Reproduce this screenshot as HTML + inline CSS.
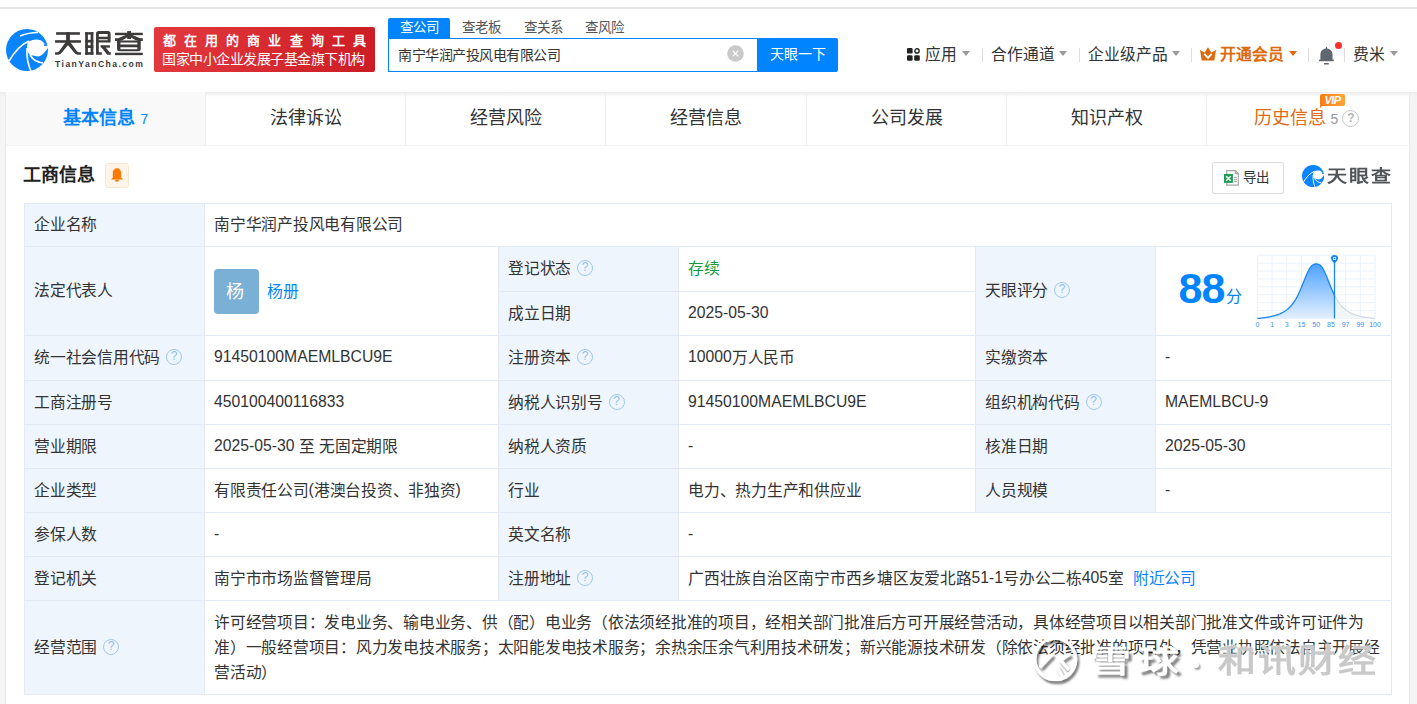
<!DOCTYPE html>
<html lang="zh-CN"><head><meta charset="utf-8">
<style>
*{margin:0;padding:0;box-sizing:border-box}
html,body{width:1417px;height:704px;overflow:hidden}
body{position:relative;background:#f5f5f5;font-family:"Liberation Sans",sans-serif;color:#333}
.a{position:absolute;white-space:nowrap}
#hdr{position:absolute;left:0;top:0;width:1417px;height:92px;background:#fff}
#topline{position:absolute;left:0;top:7px;width:1417px;height:2px;background:#e3e3e3}
.stab{position:absolute;top:18px;height:20px;width:62px;text-align:center;font-size:13.5px;line-height:20px;color:#555}
.nav{position:absolute;top:45px;font-size:15.75px;line-height:20px;color:#333}
.tri{position:absolute;top:51px;width:0;height:0;border-left:4.5px solid transparent;border-right:4.5px solid transparent;border-top:5px solid #9a9a9a}
.sep{position:absolute;top:48px;width:1px;height:14px;background:#ddd}
#card{position:absolute;left:5px;top:92px;width:1405px;height:612px;background:#fff;border-left:1px solid #ebebeb;border-right:1px solid #ebebeb}
#shadow{position:absolute;left:0;top:92px;width:1417px;height:5px;background:linear-gradient(#ececec,rgba(255,255,255,0))}
.tab{position:absolute;top:92px;height:54px;border-bottom:1px solid #f2f2f2;font-size:18px;line-height:53px;text-align:center;color:#333;border-right:1px solid #eee}
.c{position:absolute;border-left:1px solid #e2ebf5;border-top:1px solid #e2ebf5;font-size:15.75px;color:#333;white-space:nowrap}
.l{background:#eef5fc}
.t{position:absolute;left:9px;top:50%;transform:translateY(-50%);line-height:20px}
.q{display:inline-block;width:16px;height:16px;border:1.2px solid #9fc8f0;border-radius:50%;color:#92bfec;font-size:12px;line-height:14px;text-align:center;vertical-align:top;margin-left:6px;margin-top:1px}
.av{position:absolute;left:9px;top:22px;width:45px;height:45px;border-radius:4px;background:#7aafd6;color:#fff;font-size:18px;line-height:47px;text-align:center;text-indent:-3px}
.scope{position:absolute;left:9px;top:9px;line-height:25px}
.qh{display:inline-block;width:17px;height:17px;border:1.6px solid #c9c9c9;border-radius:50%;color:#b5b5b5;font-weight:bold;font-size:12px;line-height:14px;text-align:center;vertical-align:middle;margin-left:4px;position:relative;top:-1px}
.zh{letter-spacing:-0.25px}
.lat{position:relative;top:-1px}
</style></head>
<body>
<div id="hdr">
  <div id="topline"></div>
  <!-- logo -->
  <svg class="a" style="left:3px;top:26px" width="48" height="48" viewBox="0 0 48 48">
    <circle cx="24" cy="24" r="21" fill="#0a84ff"/>
    <path d="M25 16 C30 12.5 38 12.5 41 17 C42 18 41.2 19.5 40.5 20 L46 19.5 L46 21 C43 23.5 41 29.5 35 30.5 C31 30 28.5 29 27 29 C25 27 24 24.5 24 22 C24 19.5 24.3 17.5 25 16 Z" fill="#fff"/>
    <path d="M6 35 C12 25 19 18 26 15" stroke="#fff" stroke-width="1.6" fill="none"/>
    <path d="M24 22 C23.5 32 25 39 28 45" stroke="#fff" stroke-width="1.6" fill="none"/>
    <path d="M27 29 C30 34 35 36.5 40 37" stroke="#fff" stroke-width="1.6" fill="none"/>
    <path d="M17 10 C23 7.5 30 6.5 35 6.5" stroke="#fff" stroke-width="1.4" fill="none"/>
  </svg>
  <svg class="a" style="left:52px;top:28px" width="96" height="30" viewBox="0 0 1417 443">
<g fill="#3d3a3a">
<rect x="60" y="62" width="352" height="38"/>
<rect x="45" y="180" width="382" height="38"/>
<rect x="208" y="62" width="56" height="156"/>
<path d="M200 212 L272 212 L158 348 Q128 395 92 395 L45 395 L45 357 L82 357 Q100 352 116 328 Z"/>
<path d="M200 212 L272 212 L356 328 Q372 352 390 357 L427 357 L427 395 L380 395 Q344 395 314 348 Z"/>
<rect x="490" y="62" width="40" height="333"/>
<rect x="570" y="62" width="40" height="333"/>
<rect x="490" y="62" width="120" height="35"/>
<rect x="490" y="175" width="120" height="40"/>
<rect x="490" y="255" width="120" height="40"/>
<rect x="490" y="357" width="120" height="38"/>
<path d="M650 395 L650 85 Q650 45 690 45 L825 45 Q865 45 865 85 L865 215 L690 215 L690 357 L735 357 L735 395 Z M690 90 L690 128 L822 128 L822 90 Z M690 165 L690 180 L822 180 L822 165 Z"/>
<rect x="720" y="255" width="135" height="35"/>
<path d="M712 262 L772 262 L850 357 L868 357 L868 395 L815 395 Z"/>
<rect x="930" y="70" width="410" height="36"/>
<rect x="1110" y="45" width="56" height="118"/>
<path d="M1100 98 L1175 98 L1040 180 Q1015 192 990 192 L930 192 L930 150 L975 150 Z"/>
<path d="M1176 98 L1101 98 L1236 180 Q1261 192 1286 192 L1340 192 L1340 150 L1301 150 Z"/>
<path d="M960 185 L1310 185 L1310 305 Q1310 342 1272 342 L998 342 Q960 342 960 305 Z M1010 215 L1010 245 L1260 245 L1260 215 Z M1010 285 L1010 312 L1260 312 L1260 285 Z"/>
<rect x="930" y="365" width="410" height="36"/>
</g>
</svg>

  <div class="a" style="left:55px;top:58px;font-size:8.6px;line-height:12px;font-weight:bold;color:#3b3939;letter-spacing:1.45px">TianYanCha.com</div>
  <!-- red banner -->
  <div class="a" style="left:154px;top:27px;width:221px;height:45px;border-radius:2px;background:linear-gradient(100deg,#e3393e,#cc1d24)"></div>
  <div class="a" style="left:163px;top:32px;font-size:13px;line-height:17px;color:#fff;font-weight:bold;letter-spacing:8.1px">都在用的商业查询工具</div>
  <div class="a" style="left:162px;top:50px;font-size:14px;letter-spacing:-0.47px;line-height:18px;color:#fff">国家中小企业发展子基金旗下机构</div>
  <!-- search -->
  <div class="stab" style="left:388px;background:#0084ff;color:#fff;border-radius:2px 2px 0 0">查公司</div>
  <div class="stab" style="left:450px">查老板</div>
  <div class="stab" style="left:512px">查关系</div>
  <div class="stab" style="left:573px">查风险</div>
  <div class="a" style="left:388px;top:38px;width:372px;height:34px;border:1px solid #0084ff;border-right:none;background:#fff"></div>
  <div class="a" style="left:398px;top:45px;font-size:14px;letter-spacing:-0.5px;line-height:20px;color:#333">南宁华润产投风电有限公司</div>
  <svg class="a" style="left:727px;top:45px" width="17" height="17" viewBox="0 0 17 17"><circle cx="8.5" cy="8.5" r="8.3" fill="#c9c9c9"/><path d="M5.6 5.6 L11.4 11.4 M11.4 5.6 L5.6 11.4" stroke="#fff" stroke-width="1.3"/></svg>
  <div class="a" style="left:757px;top:38px;width:81px;height:34px;background:#0084ff;border-radius:0 2px 2px 0;color:#fff;font-size:14px;line-height:32px;text-align:center">天眼一下</div>
  <!-- nav -->
  <svg class="a" style="left:907px;top:48px" width="13" height="13" viewBox="0 0 13 13">
    <rect x="0" y="0" width="5.6" height="5.6" rx="1.2" fill="#222"/>
    <circle cx="10" cy="2.9" r="2.1" fill="none" stroke="#222" stroke-width="1.4"/>
    <rect x="0" y="7.2" width="5.6" height="5.6" rx="1.2" fill="#222"/>
    <rect x="7.2" y="7.2" width="5.6" height="5.6" rx="1.2" fill="#222"/>
  </svg>
  <div class="nav" style="left:925px">应用</div>
  <div class="tri" style="left:962px"></div>
  <div class="sep" style="left:982px"></div>
  <div class="nav" style="left:991px">合作通道</div>
  <div class="tri" style="left:1059px"></div>
  <div class="sep" style="left:1079px"></div>
  <div class="nav" style="left:1088px">企业级产品</div>
  <div class="tri" style="left:1172px"></div>
  <div class="sep" style="left:1191px"></div>
  <svg class="a" style="left:1200px;top:47px" width="16" height="14" viewBox="0 0 16 14">
    <path d="M0 3 L4.6 5.6 L8 0.2 L11.4 5.6 L16 3 L14.3 13.6 L1.7 13.6 Z" fill="#dd6a0c"/>
    <path d="M4.3 6.8 L8 10.8 L11.7 6.8" stroke="#fff" stroke-width="1.9" fill="none"/>
  </svg>
  <div class="nav" style="left:1220px;color:#dd6a0c;font-weight:bold">开通会员</div>
  <div class="tri" style="left:1289px;border-top-color:#dd6a0c"></div>
  <div class="sep" style="left:1308px"></div>
  <svg class="a" style="left:1319px;top:46px" width="16" height="19" viewBox="0 0 16 19">
    <path d="M1.4 14 L1.4 8.8 C1.4 4.9 4.1 2.6 7.45 2.6 C10.8 2.6 13.5 4.9 13.5 8.8 L13.5 14 Z" fill="#5f6771"/>
    <rect x="0" y="13.4" width="14.9" height="1.8" rx="0.6" fill="#5f6771"/>
    <rect x="6.9" y="0.8" width="1.1" height="2.6" fill="#5f6771"/>
    <rect x="5" y="17" width="4.8" height="1.5" fill="#5f6771"/>
  </svg>
  <div class="a" style="left:1335px;top:42px;width:7px;height:7px;border-radius:50%;background:#f5302e"></div>
  <div class="sep" style="left:1344px"></div>
  <div class="nav" style="left:1353px">费米</div>
  <div class="tri" style="left:1390px"></div>
</div>
<div id="card"></div>
<div id="shadow"></div>
<div class="tab" style="left:6px;width:200px;background:#f9f9f9"><span style="color:#0084ff;font-weight:bold">基本信息</span><span style="color:#0084ff;font-size:14px;margin-left:6px">7</span></div>
<div class="tab" style="left:206px;width:200px">法律诉讼</div>
<div class="tab" style="left:406px;width:200px">经营风险</div>
<div class="tab" style="left:606px;width:201px">经营信息</div>
<div class="tab" style="left:807px;width:200px">公司发展</div>
<div class="tab" style="left:1007px;width:200px">知识产权</div>
<div class="tab" style="left:1207px;width:204px;border-right:none"><span style="color:#e06b12;margin-left:-5px">历史信息</span><span style="color:#999;font-size:14px;margin-left:5px">5</span><span class="qh">?</span></div>
<div class="a" style="left:1320px;top:94px;width:25px;height:12px;border-radius:2px;background:linear-gradient(90deg,#f77b12,#ffa53a);color:#fff;font-size:11px;line-height:12px;font-weight:bold;font-style:italic;text-align:center;letter-spacing:-0.5px">VIP</div>
<div class="a" style="left:1320px;top:105px;width:0;height:0;border-top:3px solid #f77b12;border-right:3px solid transparent"></div>
<div class="a" style="left:23px;top:163px;font-size:18px;line-height:24px;font-weight:bold;color:#222">工商信息</div>
<div class="a" style="left:105px;top:163px;width:24px;height:25px;border-radius:3px;background:#fff4ea;border:1px solid #ffe5d0"></div>
<svg class="a" style="left:110px;top:167px" width="14" height="16" viewBox="0 0 14 16">
<path d="M7 1.2 C4 1.2 2.8 3.8 2.8 6.5 L2.8 10.5 L1 12.6 L13 12.6 L11.2 10.5 L11.2 6.5 C11.2 3.8 10 1.2 7 1.2 Z" fill="#ff7a00"/>
<ellipse cx="7" cy="13.6" rx="1.8" ry="1.2" fill="#ff7a00"/>
</svg>
<div class="a" style="left:1212px;top:162px;width:72px;height:32px;border:1px solid #dcdcdc;border-radius:2px;background:#fff"></div>
<svg class="a" style="left:1223px;top:169px" width="17" height="18" viewBox="0 0 17 18">
<path d="M3.7 1.6 L12.3 1.6 L15.3 4.6 L15.3 16.1 L3.7 16.1 Z" fill="#fff" stroke="#a3a3a3" stroke-width="1.1"/>
<path d="M12.3 1.6 L12.3 4.6 L15.3 4.6" fill="none" stroke="#a3a3a3" stroke-width="1.1"/>
<g stroke="#9a9a9a" stroke-width="1"><line x1="11.2" y1="8.4" x2="13.8" y2="8.4"/><line x1="11.2" y1="10.5" x2="13.8" y2="10.5"/><line x1="11.2" y1="12.5" x2="13.8" y2="12.5"/></g>
<rect x="1" y="4.9" width="8.9" height="9" fill="#1f9d55"/>
<path d="M3.2 7.2 L7.7 11.8 M7.7 7.2 L3.2 11.8" stroke="#fff" stroke-width="1.5"/>
</svg>
<div class="a" style="left:1243px;top:168px;font-size:13.5px;line-height:20px;color:#333">导出</div>
<svg class="a" style="left:1301.5px;top:164.5px" width="22.2" height="22.2" viewBox="3 3 42 42">
<circle cx="24" cy="24" r="21" fill="#0a84ff"/>
<path d="M25 16 C30 12.5 38 12.5 41 17 C42 18 41.2 19.5 40.5 20 L46 19.5 L46 21 C43 23.5 41 29.5 35 30.5 C31 30 28.5 29 27 29 C25 27 24 24.5 24 22 C24 19.5 24.3 17.5 25 16 Z" fill="#fff"/>
<path d="M6 35 C12 25 19 18 26 15" stroke="#fff" stroke-width="1.8" fill="none"/>
<path d="M24 22 C23.5 32 25 39 28 45" stroke="#fff" stroke-width="1.8" fill="none"/>
<path d="M27 29 C30 34 35 36.5 40 37" stroke="#fff" stroke-width="1.8" fill="none"/>
</svg>
<div class="a" style="left:1327px;top:165px;font-size:20px;line-height:26px;font-weight:bold;color:#50555a;letter-spacing:2.2px;transform:scaleY(0.85);transform-origin:0 0">天眼查</div>

<div class="c l" style="left:24px;top:203px;width:180px;height:43px"><div class="t" style=""><span class="zh">企业名称</span></div></div>
<div class="c" style="left:204px;top:203px;width:1187px;height:43px"><div class="t" style=""><span class="zh">南宁华润产投风电有限公司</span></div></div>
<div class="c l" style="left:24px;top:246px;width:180px;height:89px"><div class="t" style=""><span class="zh">法定代表人</span></div></div>
<div class="c" style="left:204px;top:246px;width:294px;height:89px"><div class="av">杨</div><div class="a" style="left:62px;top:35px;line-height:20px;color:#0084ff">杨册</div></div>
<div class="c l" style="left:498px;top:246px;width:180px;height:45px"><div class="t" style=""><span class="zh">登记状态</span><span class="q"><span class="lat">?</span></span></div></div>
<div class="c" style="left:678px;top:246px;width:297px;height:45px"><div class="t" style="color:#0f9c40"><span class="zh">存续</span></div></div>
<div class="c l" style="left:498px;top:291px;width:180px;height:44px"><div class="t" style=""><span class="zh">成立日期</span></div></div>
<div class="c" style="left:678px;top:291px;width:297px;height:44px"><div class="t" style=""><span class="lat">2025-05-30</span></div></div>
<div class="c l" style="left:975px;top:246px;width:180px;height:89px"><div class="t" style=""><span class="zh">天眼评分</span><span class="q"><span class="lat">?</span></span></div></div>
<div class="c" style="left:1155px;top:246px;width:236px;height:89px"><div class="a" style="left:22.5px;top:16px;font-size:43px;line-height:50px;font-weight:bold;letter-spacing:-1px;color:#0084ff">88</div><div class="a" style="left:70px;top:40px;font-size:16px;line-height:20px;color:#0084ff">分</div></div>
<div class="c l" style="left:24px;top:335px;width:180px;height:45px"><div class="t" style=""><span class="zh">统一社会信用代码</span><span class="q"><span class="lat">?</span></span></div></div>
<div class="c" style="left:204px;top:335px;width:294px;height:45px"><div class="t" style=""><span class="lat">91450100MAEMLBCU9E</span></div></div>
<div class="c l" style="left:498px;top:335px;width:180px;height:45px"><div class="t" style=""><span class="zh">注册资本</span><span class="q"><span class="lat">?</span></span></div></div>
<div class="c" style="left:678px;top:335px;width:297px;height:45px"><div class="t" style=""><span class="lat">10000</span><span class="zh">万人民币</span></div></div>
<div class="c l" style="left:975px;top:335px;width:180px;height:45px"><div class="t" style=""><span class="zh">实缴资本</span></div></div>
<div class="c" style="left:1155px;top:335px;width:236px;height:45px"><div class="t" style=""><span class="lat">-</span></div></div>
<div class="c l" style="left:24px;top:380px;width:180px;height:44px"><div class="t" style=""><span class="zh">工商注册号</span></div></div>
<div class="c" style="left:204px;top:380px;width:294px;height:44px"><div class="t" style=""><span class="lat">450100400116833</span></div></div>
<div class="c l" style="left:498px;top:380px;width:180px;height:44px"><div class="t" style=""><span class="zh">纳税人识别号</span><span class="q"><span class="lat">?</span></span></div></div>
<div class="c" style="left:678px;top:380px;width:297px;height:44px"><div class="t" style=""><span class="lat">91450100MAEMLBCU9E</span></div></div>
<div class="c l" style="left:975px;top:380px;width:180px;height:44px"><div class="t" style=""><span class="zh">组织机构代码</span><span class="q"><span class="lat">?</span></span></div></div>
<div class="c" style="left:1155px;top:380px;width:236px;height:44px"><div class="t" style=""><span class="lat">MAEMLBCU-9</span></div></div>
<div class="c l" style="left:24px;top:424px;width:180px;height:44px"><div class="t" style=""><span class="zh">营业期限</span></div></div>
<div class="c" style="left:204px;top:424px;width:294px;height:44px"><div class="t" style=""><span class="lat">2025-05-30 </span><span class="zh">至</span> <span class="zh">无固定期限</span></div></div>
<div class="c l" style="left:498px;top:424px;width:180px;height:44px"><div class="t" style=""><span class="zh">纳税人资质</span></div></div>
<div class="c" style="left:678px;top:424px;width:297px;height:44px"><div class="t" style=""><span class="lat">-</span></div></div>
<div class="c l" style="left:975px;top:424px;width:180px;height:44px"><div class="t" style=""><span class="zh">核准日期</span></div></div>
<div class="c" style="left:1155px;top:424px;width:236px;height:44px"><div class="t" style=""><span class="lat">2025-05-30</span></div></div>
<div class="c l" style="left:24px;top:468px;width:180px;height:44px"><div class="t" style=""><span class="zh">企业类型</span></div></div>
<div class="c" style="left:204px;top:468px;width:294px;height:44px"><div class="t" style=""><span class="zh">有限责任公司</span><span class="lat">(</span><span class="zh">港澳台投资、非独资</span><span class="lat">)</span></div></div>
<div class="c l" style="left:498px;top:468px;width:180px;height:44px"><div class="t" style=""><span class="zh">行业</span></div></div>
<div class="c" style="left:678px;top:468px;width:297px;height:44px"><div class="t" style=""><span class="zh">电力、热力生产和供应业</span></div></div>
<div class="c l" style="left:975px;top:468px;width:180px;height:44px"><div class="t" style=""><span class="zh">人员规模</span></div></div>
<div class="c" style="left:1155px;top:468px;width:236px;height:44px"><div class="t" style=""><span class="lat">-</span></div></div>
<div class="c l" style="left:24px;top:512px;width:180px;height:44px"><div class="t" style=""><span class="zh">参保人数</span></div></div>
<div class="c" style="left:204px;top:512px;width:294px;height:44px"><div class="t" style=""><span class="lat">-</span></div></div>
<div class="c l" style="left:498px;top:512px;width:180px;height:44px"><div class="t" style=""><span class="zh">英文名称</span></div></div>
<div class="c" style="left:678px;top:512px;width:713px;height:44px"><div class="t" style=""><span class="lat">-</span></div></div>
<div class="c l" style="left:24px;top:556px;width:180px;height:44px"><div class="t" style=""><span class="zh">登记机关</span></div></div>
<div class="c" style="left:204px;top:556px;width:294px;height:44px"><div class="t" style=""><span class="zh">南宁市市场监督管理局</span></div></div>
<div class="c l" style="left:498px;top:556px;width:180px;height:44px"><div class="t" style=""><span class="zh">注册地址</span><span class="q"><span class="lat">?</span></span></div></div>
<div class="c" style="left:678px;top:556px;width:713px;height:44px"><div class="t" style=""><span class="zh">广西壮族自治区南宁市西乡塘区友爱北路</span><span class="lat">51-1</span><span class="zh">号办公二栋</span><span class="lat">405</span><span class="zh">室</span><span style="color:#0084ff;margin-left:9px"><span class="zh">附近公司</span></span></div></div>
<div class="c l" style="left:24px;top:600px;width:180px;height:94px"><div class="t" style=""><span class="zh">经营范围</span><span class="q"><span class="lat">?</span></span></div></div>
<div class="c" style="left:204px;top:600px;width:1187px;height:94px"><div class="scope zh">许可经营项目：发电业务、输电业务、供（配）电业务（依法须经批准的项目，经相关部门批准后方可开展经营活动，具体经营项目以相关部门批准文件或许可证件为<br>准）一般经营项目：风力发电技术服务；太阳能发电技术服务；余热余压余气利用技术研发；新兴能源技术研发（除依法须经批准的项目外，凭营业执照依法自主开展经<br>营活动）</div></div>
<div class="a" style="left:24px;top:203px;width:1368px;height:492px;border-right:1px solid #e2ebf5;border-bottom:1px solid #e2ebf5"></div>
<svg class="a" style="left:1250px;top:250px" width="135" height="82" viewBox="0 0 135 82"><defs><linearGradient id="g1" x1="0" y1="0" x2="0" y2="1"><stop offset="0" stop-color="#4ea2ff"/><stop offset="1" stop-color="#e3f0ff"/></linearGradient></defs><g stroke="#eaf2fb" stroke-width="1"><line x1="7.40" y1="5.20" x2="7.40" y2="68.50"/><line x1="22.10" y1="5.20" x2="22.10" y2="68.50"/><line x1="36.80" y1="5.20" x2="36.80" y2="68.50"/><line x1="51.50" y1="5.20" x2="51.50" y2="68.50"/><line x1="66.20" y1="5.20" x2="66.20" y2="68.50"/><line x1="80.90" y1="5.20" x2="80.90" y2="68.50"/><line x1="95.60" y1="5.20" x2="95.60" y2="68.50"/><line x1="110.30" y1="5.20" x2="110.30" y2="68.50"/><line x1="125.00" y1="5.20" x2="125.00" y2="68.50"/><line x1="7.40" y1="5.20" x2="125.00" y2="5.20"/><line x1="7.40" y1="13.11" x2="125.00" y2="13.11"/><line x1="7.40" y1="21.02" x2="125.00" y2="21.02"/><line x1="7.40" y1="28.94" x2="125.00" y2="28.94"/><line x1="7.40" y1="36.85" x2="125.00" y2="36.85"/><line x1="7.40" y1="44.76" x2="125.00" y2="44.76"/><line x1="7.40" y1="52.67" x2="125.00" y2="52.67"/><line x1="7.40" y1="60.59" x2="125.00" y2="60.59"/><line x1="7.40" y1="68.50" x2="125.00" y2="68.50"/></g><polygon points="84.50,45.23 85.00,46.21 85.50,47.16 86.00,48.06 86.50,48.94 87.00,49.78 87.50,50.58 88.00,51.36 88.50,52.10 89.00,52.81 89.50,53.49 90.00,54.15 90.50,54.77 91.00,55.37 91.50,55.94 92.00,56.49 92.50,57.01 93.00,57.51 93.50,57.99 94.00,58.45 94.50,58.88 95.00,59.30 95.50,59.70 96.00,60.08 96.50,60.45 97.00,60.80 97.50,61.14 98.00,61.46 98.50,61.77 99.00,62.06 99.50,62.34 100.00,62.61 100.50,62.87 101.00,63.12 101.50,63.36 102.00,63.59 102.50,63.81 103.00,64.02 103.50,64.22 104.00,64.41 104.50,64.60 105.00,64.78 105.50,64.95 106.00,65.12 106.50,65.28 107.00,65.43 107.50,65.58 108.00,65.72 108.50,65.86 109.00,65.99 109.50,66.12 110.00,66.24 110.50,66.36 111.00,66.47 111.50,66.58 112.00,66.69 112.50,66.79 113.00,66.89 113.50,66.98 114.00,67.08 114.50,67.16 115.00,67.25 115.50,67.33 116.00,67.41 116.50,67.49 117.00,67.57 117.50,67.64 118.00,67.71 118.50,67.78 119.00,67.85 119.50,67.91 120.00,67.97 120.50,68.03 121.00,68.09 121.50,68.15 122.00,68.20 122.50,68.26 123.00,68.31 123.50,68.36 124.00,68.41 124.50,68.45 125.00,68.50 125.00,68.50 125.00,68.50 84.50,68.50" fill="#f3f6f9"/><polyline points="84.50,45.23 85.00,46.21 85.50,47.16 86.00,48.06 86.50,48.94 87.00,49.78 87.50,50.58 88.00,51.36 88.50,52.10 89.00,52.81 89.50,53.49 90.00,54.15 90.50,54.77 91.00,55.37 91.50,55.94 92.00,56.49 92.50,57.01 93.00,57.51 93.50,57.99 94.00,58.45 94.50,58.88 95.00,59.30 95.50,59.70 96.00,60.08 96.50,60.45 97.00,60.80 97.50,61.14 98.00,61.46 98.50,61.77 99.00,62.06 99.50,62.34 100.00,62.61 100.50,62.87 101.00,63.12 101.50,63.36 102.00,63.59 102.50,63.81 103.00,64.02 103.50,64.22 104.00,64.41 104.50,64.60 105.00,64.78 105.50,64.95 106.00,65.12 106.50,65.28 107.00,65.43 107.50,65.58 108.00,65.72 108.50,65.86 109.00,65.99 109.50,66.12 110.00,66.24 110.50,66.36 111.00,66.47 111.50,66.58 112.00,66.69 112.50,66.79 113.00,66.89 113.50,66.98 114.00,67.08 114.50,67.16 115.00,67.25 115.50,67.33 116.00,67.41 116.50,67.49 117.00,67.57 117.50,67.64 118.00,67.71 118.50,67.78 119.00,67.85 119.50,67.91 120.00,67.97 120.50,68.03 121.00,68.09 121.50,68.15 122.00,68.20 122.50,68.26 123.00,68.31 123.50,68.36 124.00,68.41 124.50,68.45 125.00,68.50 125.00,68.50" fill="none" stroke="#cdd9e6" stroke-width="1.2"/><polygon points="7.40,68.50 7.90,68.45 8.40,68.41 8.90,68.36 9.40,68.31 9.90,68.26 10.40,68.20 10.90,68.15 11.40,68.09 11.90,68.03 12.40,67.97 12.90,67.91 13.40,67.85 13.90,67.78 14.40,67.71 14.90,67.64 15.40,67.57 15.90,67.49 16.40,67.41 16.90,67.33 17.40,67.25 17.90,67.16 18.40,67.08 18.90,66.98 19.40,66.89 19.90,66.79 20.40,66.69 20.90,66.58 21.40,66.47 21.90,66.36 22.40,66.24 22.90,66.12 23.40,65.99 23.90,65.86 24.40,65.72 24.90,65.58 25.40,65.43 25.90,65.28 26.40,65.12 26.90,64.95 27.40,64.78 27.90,64.60 28.40,64.41 28.90,64.22 29.40,64.02 29.90,63.81 30.40,63.59 30.90,63.36 31.40,63.12 31.90,62.87 32.40,62.61 32.90,62.34 33.40,62.06 33.90,61.77 34.40,61.46 34.90,61.14 35.40,60.80 35.90,60.45 36.40,60.08 36.90,59.70 37.40,59.30 37.90,58.88 38.40,58.45 38.90,57.99 39.40,57.51 39.90,57.01 40.40,56.49 40.90,55.94 41.40,55.37 41.90,54.77 42.40,54.15 42.90,53.49 43.40,52.81 43.90,52.10 44.40,51.36 44.90,50.58 45.40,49.78 45.90,48.94 46.40,48.06 46.90,47.16 47.40,46.21 47.90,45.23 48.40,44.22 48.90,43.18 49.40,42.10 49.90,40.99 50.40,39.84 50.90,38.67 51.40,37.48 51.90,36.26 52.40,35.02 52.90,33.77 53.40,32.51 53.90,31.24 54.40,29.98 54.90,28.72 55.40,27.47 55.90,26.25 56.40,25.05 56.90,23.89 57.40,22.77 57.90,21.70 58.40,20.69 58.90,19.74 59.40,18.85 59.90,18.04 60.40,17.31 60.90,16.65 61.40,16.07 61.90,15.57 62.40,15.15 62.90,14.80 63.40,14.52 63.90,14.32 64.40,14.17 64.90,14.07 65.40,14.02 65.90,14.00 66.40,14.00 66.90,14.01 67.40,14.06 67.90,14.14 68.40,14.28 68.90,14.48 69.40,14.74 69.90,15.07 70.40,15.48 70.90,15.96 71.40,16.53 71.90,17.17 72.40,17.89 72.90,18.69 73.40,19.56 73.90,20.49 74.40,21.50 74.90,22.55 75.40,23.66 75.90,24.82 76.40,26.01 76.90,27.23 77.40,28.47 77.90,29.72 78.40,30.99 78.90,32.26 79.40,33.52 79.90,34.77 80.40,36.01 80.90,37.24 81.40,38.44 81.90,39.61 82.40,40.76 82.90,41.88 83.40,42.96 83.90,44.02 84.40,45.03 84.50,45.23 84.50,68.50 7.40,68.50" fill="url(#g1)"/><polyline points="7.40,68.50 7.90,68.45 8.40,68.41 8.90,68.36 9.40,68.31 9.90,68.26 10.40,68.20 10.90,68.15 11.40,68.09 11.90,68.03 12.40,67.97 12.90,67.91 13.40,67.85 13.90,67.78 14.40,67.71 14.90,67.64 15.40,67.57 15.90,67.49 16.40,67.41 16.90,67.33 17.40,67.25 17.90,67.16 18.40,67.08 18.90,66.98 19.40,66.89 19.90,66.79 20.40,66.69 20.90,66.58 21.40,66.47 21.90,66.36 22.40,66.24 22.90,66.12 23.40,65.99 23.90,65.86 24.40,65.72 24.90,65.58 25.40,65.43 25.90,65.28 26.40,65.12 26.90,64.95 27.40,64.78 27.90,64.60 28.40,64.41 28.90,64.22 29.40,64.02 29.90,63.81 30.40,63.59 30.90,63.36 31.40,63.12 31.90,62.87 32.40,62.61 32.90,62.34 33.40,62.06 33.90,61.77 34.40,61.46 34.90,61.14 35.40,60.80 35.90,60.45 36.40,60.08 36.90,59.70 37.40,59.30 37.90,58.88 38.40,58.45 38.90,57.99 39.40,57.51 39.90,57.01 40.40,56.49 40.90,55.94 41.40,55.37 41.90,54.77 42.40,54.15 42.90,53.49 43.40,52.81 43.90,52.10 44.40,51.36 44.90,50.58 45.40,49.78 45.90,48.94 46.40,48.06 46.90,47.16 47.40,46.21 47.90,45.23 48.40,44.22 48.90,43.18 49.40,42.10 49.90,40.99 50.40,39.84 50.90,38.67 51.40,37.48 51.90,36.26 52.40,35.02 52.90,33.77 53.40,32.51 53.90,31.24 54.40,29.98 54.90,28.72 55.40,27.47 55.90,26.25 56.40,25.05 56.90,23.89 57.40,22.77 57.90,21.70 58.40,20.69 58.90,19.74 59.40,18.85 59.90,18.04 60.40,17.31 60.90,16.65 61.40,16.07 61.90,15.57 62.40,15.15 62.90,14.80 63.40,14.52 63.90,14.32 64.40,14.17 64.90,14.07 65.40,14.02 65.90,14.00 66.40,14.00 66.90,14.01 67.40,14.06 67.90,14.14 68.40,14.28 68.90,14.48 69.40,14.74 69.90,15.07 70.40,15.48 70.90,15.96 71.40,16.53 71.90,17.17 72.40,17.89 72.90,18.69 73.40,19.56 73.90,20.49 74.40,21.50 74.90,22.55 75.40,23.66 75.90,24.82 76.40,26.01 76.90,27.23 77.40,28.47 77.90,29.72 78.40,30.99 78.90,32.26 79.40,33.52 79.90,34.77 80.40,36.01 80.90,37.24 81.40,38.44 81.90,39.61 82.40,40.76 82.90,41.88 83.40,42.96 83.90,44.02 84.40,45.03 84.50,45.23" fill="none" stroke="#1a86f5" stroke-width="1.3"/><line x1="84.5" y1="10" x2="84.5" y2="68.50" stroke="#1a86f5" stroke-width="1.3"/><path d="M80.9 8.6 A3.6 3.6 0 1 1 88.1 8.6 Q87.7 11 84.5 13.5 Q81.3 11 80.9 8.6 Z" fill="#1a86f5"/><circle cx="84.5" cy="8.4" r="1.6" fill="#fff"/><circle cx="84.5" cy="8.4" r="0.8" fill="#1a86f5"/><text x="7.40" y="77" text-anchor="middle" font-size="7" fill="#3d90f0" font-family="Liberation Sans">0</text><text x="22.10" y="77" text-anchor="middle" font-size="7" fill="#3d90f0" font-family="Liberation Sans">1</text><text x="36.80" y="77" text-anchor="middle" font-size="7" fill="#3d90f0" font-family="Liberation Sans">3</text><text x="51.50" y="77" text-anchor="middle" font-size="7" fill="#3d90f0" font-family="Liberation Sans">15</text><text x="66.20" y="77" text-anchor="middle" font-size="7" fill="#3d90f0" font-family="Liberation Sans">50</text><text x="80.90" y="77" text-anchor="middle" font-size="7" fill="#3d90f0" font-family="Liberation Sans">85</text><text x="95.60" y="77" text-anchor="middle" font-size="7" fill="#3d90f0" font-family="Liberation Sans">97</text><text x="110.30" y="77" text-anchor="middle" font-size="7" fill="#3d90f0" font-family="Liberation Sans">99</text><text x="125.00" y="77" text-anchor="middle" font-size="7" fill="#3d90f0" font-family="Liberation Sans">100</text></svg>
<svg class="a" style="left:1026px;top:634px" width="56" height="52" viewBox="0 0 56 52">
<defs><filter id="sh" x="-20%" y="-20%" width="140%" height="140%"><feGaussianBlur in="SourceAlpha" stdDeviation="1.3"/><feOffset dx="2" dy="2.5" result="o"/><feComponentTransfer><feFuncA type="linear" slope="0.55"/></feComponentTransfer><feMerge><feMergeNode/><feMergeNode in="SourceGraphic"/></feMerge></filter></defs>
<g filter="url(#sh)" fill="none" stroke="#fff" stroke-width="3.2" stroke-linecap="round">
<circle cx="29.2" cy="25" r="20.5"/>
<path d="M15 32 L25.5 21"/>
<path d="M43 20.5 L34.5 26 L42 35"/>
<path d="M31.5 33 L37 44"/>
</g>
</svg>
<div class="a" style="left:1090px;top:643px;font-size:32px;line-height:38px;font-weight:bold;color:#fff;transform:scale(1.28,0.96);transform-origin:0 0;text-shadow:2px 3px 2px rgba(0,0,0,0.5)">雪</div>
<div class="a" style="left:1138px;top:643px;font-size:32px;line-height:38px;font-weight:bold;color:#fff;transform:scale(1.28,0.96);transform-origin:0 0;text-shadow:2px 3px 2px rgba(0,0,0,0.5)">球</div>
<div class="a" style="left:1193px;top:662px;width:6px;height:6px;border-radius:50%;background:#fff;box-shadow:1.5px 2px 2px rgba(0,0,0,0.4)"></div>
<div class="a" style="left:1218px;top:643px;font-size:33px;line-height:38px;font-weight:bold;color:#c9c9c9;letter-spacing:1.8px;transform:scale(1.15,0.98);transform-origin:0 0;text-shadow:-1px -1px 1px rgba(255,255,255,0.7)">和讯财经</div>

</body></html>
